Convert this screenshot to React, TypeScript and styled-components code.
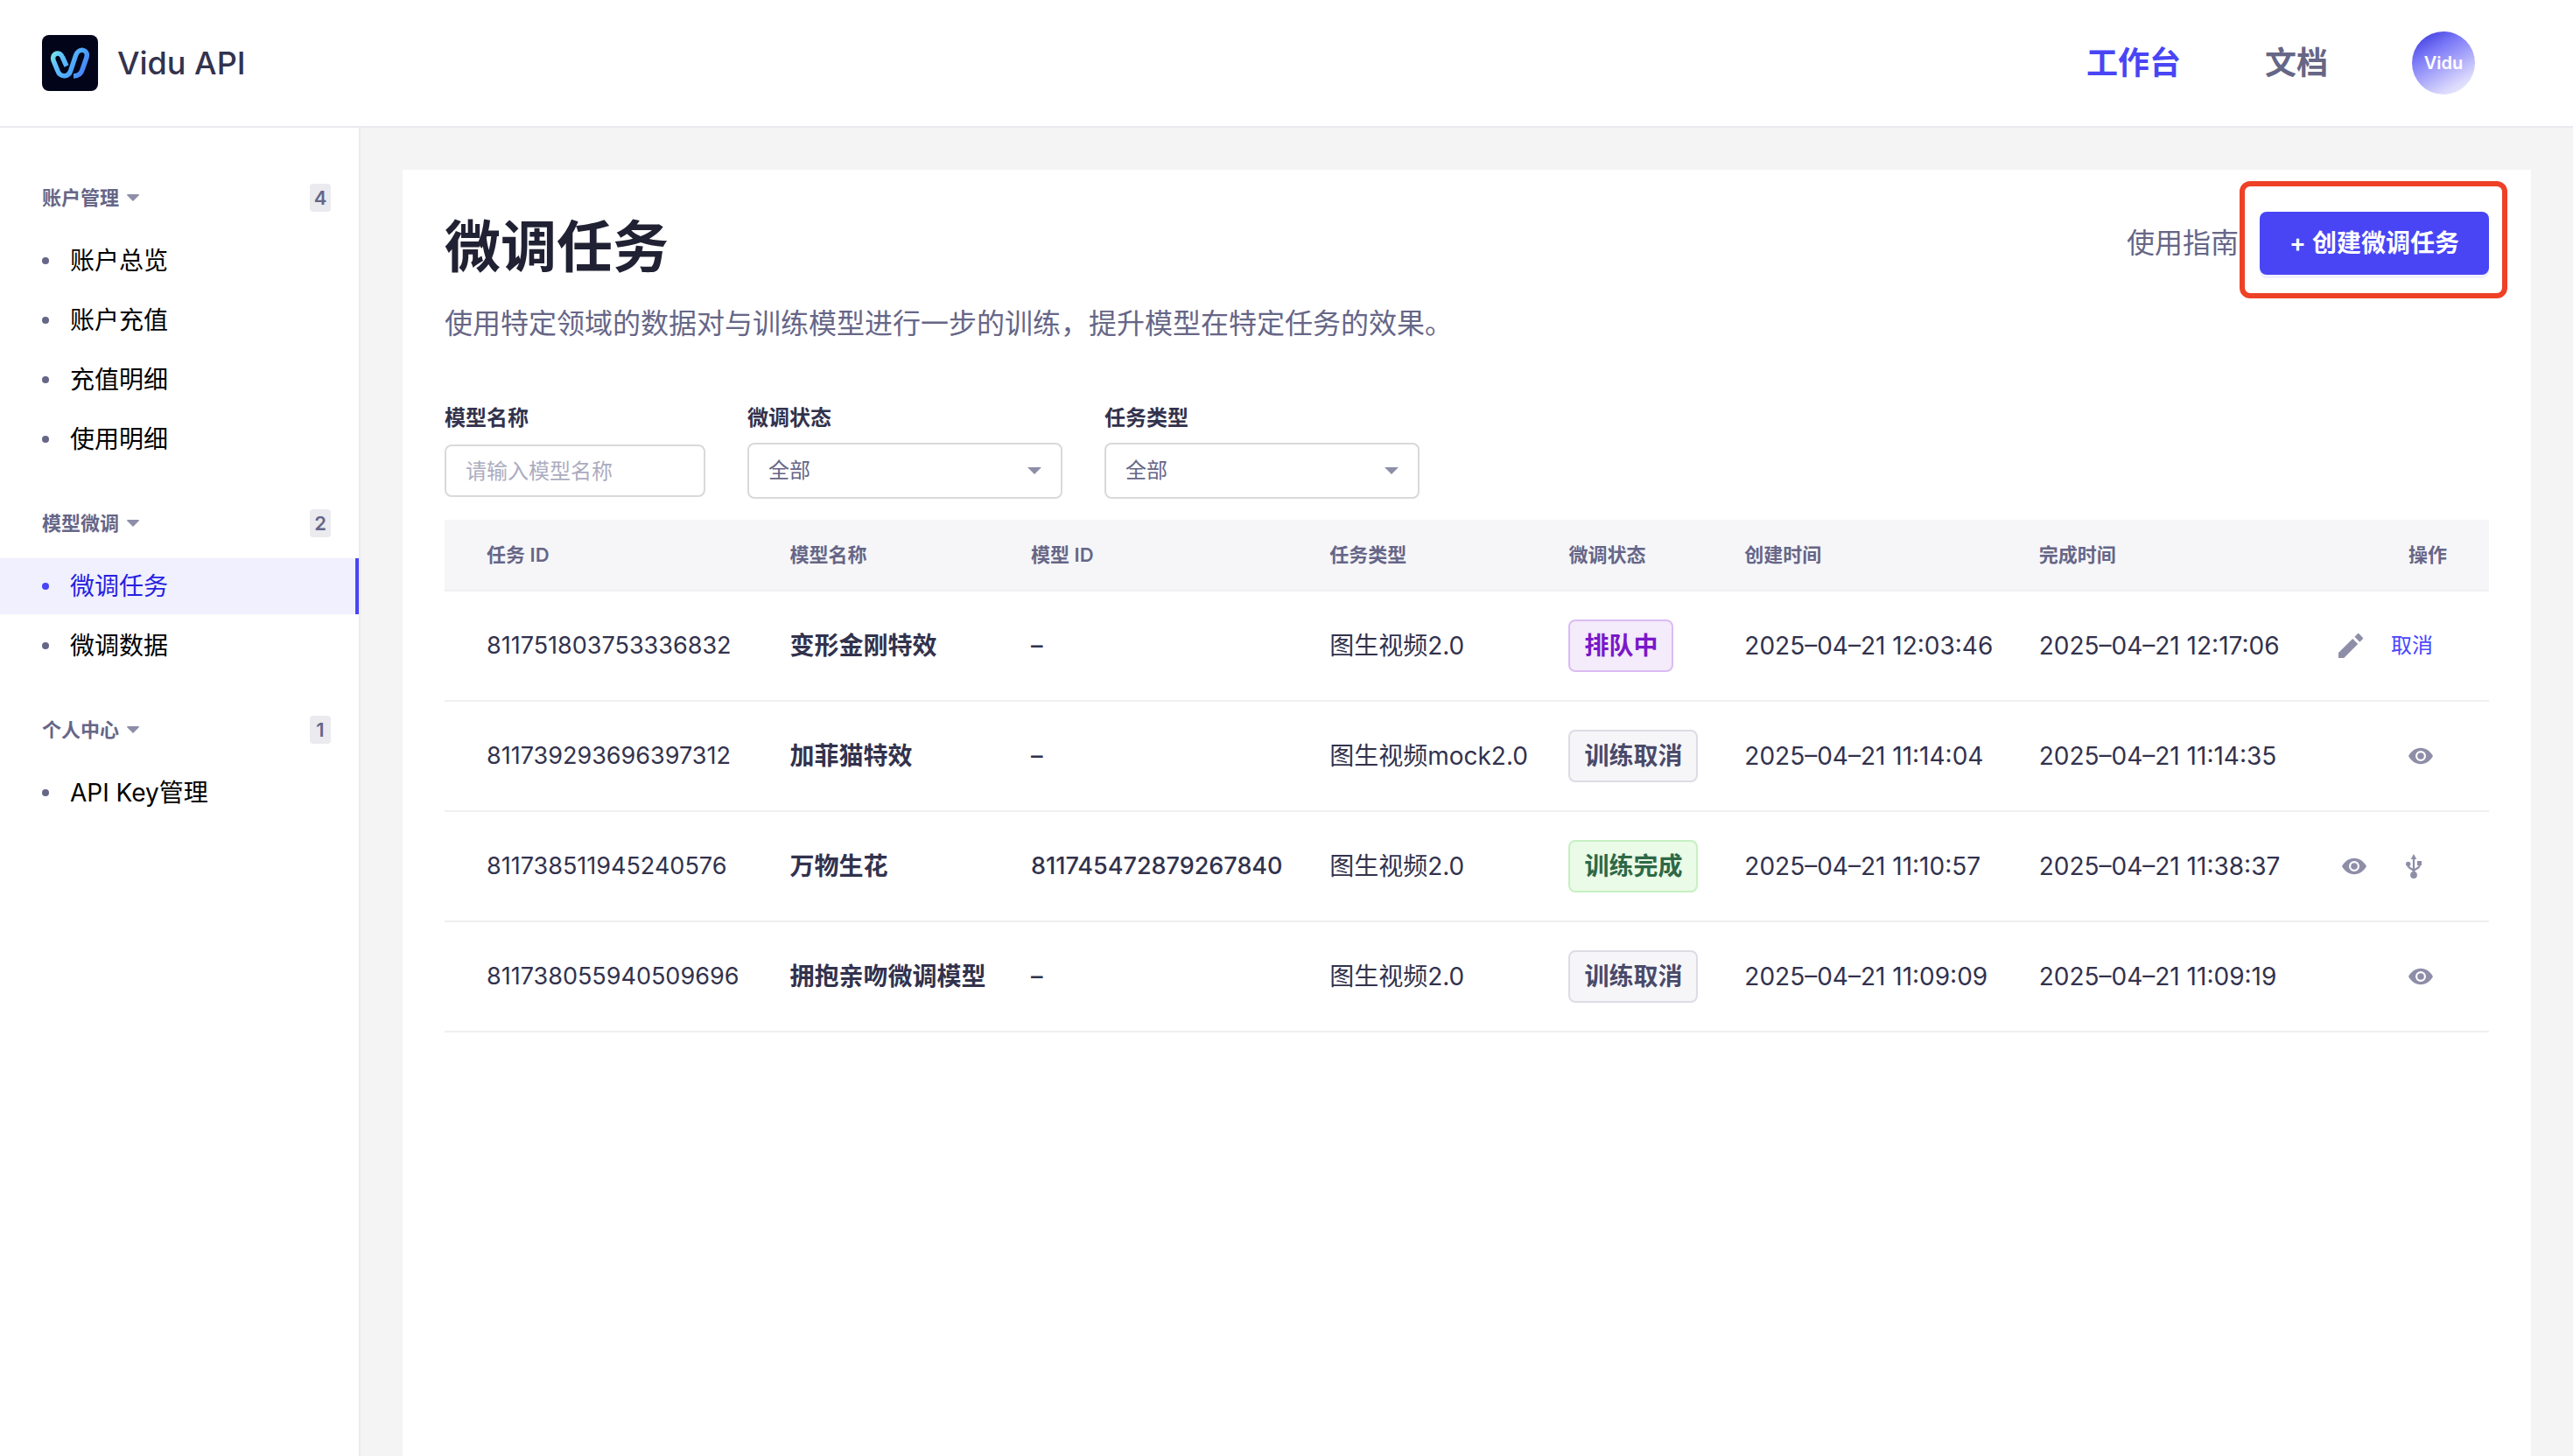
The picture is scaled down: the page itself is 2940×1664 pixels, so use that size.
import React from "react";
import styled, { createGlobalStyle, css } from "styled-components";

const GlobalStyle = createGlobalStyle`
  *, *::before, *::after { box-sizing: border-box; }
  html, body, #root { height: 100%; }
  body {
    margin: 0;
    background: #f4f4f4;
    color: #33334d;
    font-family: Inter, "Noto Sans CJK SC", sans-serif;
    font-size: 28px;
    line-height: 40px;
  }
  button, input, select { font: inherit; color: inherit; }
  a { color: inherit; text-decoration: none; }
`;

const Page = styled.div`
  min-height: 100%;
  display: flex;
  flex-direction: column;
`;

const Header = styled.header`
  display: flex;
  align-items: center;
  justify-content: space-between;
  height: 146px;
  flex: none;
  padding: 0 112px 0 48px;
  background: #fff;
  border-bottom: 2px solid #eaeaef;
`;

const Brand = styled.a`
  display: flex;
  align-items: center;
  gap: 22px;
  font-size: 36px;
  font-weight: 500;
`;

const TopNav = styled.nav`
  display: flex;
  align-items: center;
  gap: 96px;
`;

const TopLink = styled.a<{ $active?: boolean }>`
  font-size: 36px;
  font-weight: 600;
  color: ${(p) => (p.$active ? "#4945f5" : "#666687")};
`;

const Avatar = styled.button`
  width: 72px;
  height: 72px;
  padding: 0;
  border: 0;
  border-radius: 50%;
  color: #fff;
  font-size: 20px;
  font-weight: 600;
  background: linear-gradient(150deg, #4340e0 8%, #7b79f7 32%, #dcdafc 80%, #f0f0ff 100%);
`;

const Body = styled.div`
  flex: 1;
  display: flex;
`;

const Sidebar = styled.aside`
  flex: none;
  width: 412px;
  padding-top: 56px;
  background: #fff;
  border-right: 2px solid #eaeaef;
`;

const Group = styled.section`
  margin-bottom: 40px;
`;

const GroupHead = styled.button`
  display: flex;
  align-items: center;
  width: 100%;
  height: 48px;
  margin-bottom: 16px;
  padding: 0 32px 0 48px;
  border: 0;
  background: none;
  color: #666687;
  font-size: 22px;
  font-weight: 600;
  line-height: 32px;
`;

const Caret = styled.svg`
  width: 14px;
  height: 8px;
  margin-left: 9px;
  fill: #8e8ea9;
`;

const Count = styled.span`
  margin-left: auto;
  width: 24px;
  border-radius: 4px;
  background: #eaeaef;
  text-align: center;
`;

const Menu = styled.ul`
  display: flex;
  flex-direction: column;
  gap: 4px;
  margin: 0;
  padding: 0;
  list-style: none;
`;

const MenuLink = styled.a<{ $active?: boolean }>`
  display: flex;
  align-items: center;
  gap: 24px;
  height: 64px;
  padding-left: 48px;
  color: #000;

  &::before {
    content: "";
    width: 8px;
    height: 8px;
    border-radius: 50%;
    background: #666687;
  }

  ${(p) =>
    p.$active &&
    css`
      background: #f0f0ff;
      color: #271fe0;
      border-right: 4px solid #4945f5;
      &::before { background: #4945f5; }
    `}
`;

const Main = styled.main`
  flex: 1;
  min-width: 0;
  margin: 48px 48px 0;
  padding: 48px;
  background: #fff;
`;

const TitleRow = styled.div`
  display: flex;
  justify-content: space-between;
  align-items: flex-start;
`;

const Title = styled.h1`
  margin: 0;
  font-size: 64px;
  font-weight: 700;
  line-height: 80px;
  color: #212134;
`;

const Intro = styled.p`
  margin: 24px 0 0;
  font-size: 32px;
  line-height: 48px;
  color: #666687;
`;

const TitleActions = styled.div`
  display: flex;
  align-items: center;
  gap: 24px;
`;

const Guide = styled.a`
  font-size: 32px;
  color: #666687;
`;

const Highlight = styled.div`
  position: relative;

  &::after {
    content: "";
    position: absolute;
    inset: -35px -21px -27px -23px;
    border: 6px solid #ee4126;
    border-radius: 12px;
    pointer-events: none;
  }
`;

const CreateButton = styled.button`
  display: block;
  height: 72px;
  padding: 0 34px;
  border: 0;
  border-radius: 8px;
  background: #4945f5;
  box-shadow: 0 4px 0 #f0f0ff;
  color: #fff;
  font-size: 28px;
  font-weight: 600;
`;

const Filters = styled.form`
  display: flex;
  gap: 48px;
  margin: 64px 0 24px;
`;

const Field = styled.div`
  display: flex;
  flex-direction: column;
`;

const Label = styled.label`
  margin-bottom: 8px;
  font-size: 24px;
  font-weight: 600;
  color: #32324d;
`;

const Control = styled.div`
  display: flex;
  align-items: center;
  height: 64px;
`;

const TextInput = styled.input`
  width: 298px;
  height: 60px;
  padding: 0 22px;
  border: 2px solid #d9d9d9;
  border-radius: 8px;
  background: #fff;
  font-size: 24px;

  &::placeholder { color: #acacbf; opacity: 1; }
`;

const SelectBox = styled.div`
  position: relative;
  width: 360px;

  svg {
    position: absolute;
    right: 24px;
    top: 28px;
    width: 16px;
    height: 8px;
    fill: #8e8ea9;
    pointer-events: none;
  }
`;

const Select = styled.select`
  appearance: none;
  display: block;
  width: 100%;
  height: 64px;
  padding: 0 22px;
  border: 2px solid #d9d9d9;
  border-radius: 8px;
  background: #fff;
  color: #666687;
  font-size: 24px;
`;

const Table = styled.table`
  width: 100%;
  table-layout: fixed;
  border-collapse: separate;
  border-spacing: 0;
  white-space: nowrap;
`;

const Th = styled.th<{ $end?: boolean }>`
  height: 82px;
  padding: 0 0 0 2px;
  background: #f6f6f9;
  border-bottom: 2px solid #efeff0;
  color: #666687;
  font-size: 22px;
  font-weight: 600;
  text-align: ${(p) => (p.$end ? "right" : "left")};
  ${(p) => p.$end && "padding-right: 48px;"}
  &:first-child { padding-left: 48px; }
`;

const Td = styled.td`
  height: 126px;
  padding: 0 0 0 2px;
  border-bottom: 2px solid #efeff0;
  color: #32324d;
  &:first-child { padding-left: 48px; }
`;

const NameCell = styled(Td)`
  font-weight: 600;
`;

const IdCell = styled(Td)<{ $medium?: boolean }>`
  font-size: 27px;
  font-weight: ${(p) => (p.$medium ? 500 : 400)};
`;

const tones = {
  purple: ["#f4ebfb", "#dbbcf2", "#7a18c9"],
  gray: ["#f6f6f9", "#dcdce4", "#4a4a6a"],
  green: ["#eafbe7", "#c6f0c2", "#2f6846"],
};

const Tag = styled.span<{ $tone: keyof typeof tones }>`
  display: inline-block;
  padding: 8px 16px;
  border: 2px solid ${(p) => tones[p.$tone][1]};
  border-radius: 8px;
  background: ${(p) => tones[p.$tone][0]};
  color: ${(p) => tones[p.$tone][2]};
  font-weight: 600;
`;

const Actions = styled.div`
  display: flex;
  align-items: center;
  justify-content: flex-end;
  gap: 32px;
  padding-right: 64px;
`;

const IconButton = styled.button<{ $wide?: boolean }>`
  display: flex;
  align-items: center;
  justify-content: center;
  width: ${(p) => (p.$wide ? 44 : 28)}px;
  padding: 0;
  border: 0;
  background: none;
  color: #8e8ea9;
  svg { display: block; fill: currentColor; }
`;

const TextButton = styled.button`
  padding: 0;
  border: 0;
  background: none;
  color: #4945ff;
  font-size: 24px;
`;

const Triangle = () => (
  <Caret viewBox="0 0 14 8" preserveAspectRatio="none" aria-hidden="true">
    <path d="M0 .9C0 .3.4 0 1 0h12c.6 0 1 .3 1 .9L7 8z" />
  </Caret>
);

const Logo = () => (
  <svg width="64" height="64" viewBox="0 0 64 64" aria-hidden="true">
    <defs>
      <linearGradient id="ribbon" x1="10" y1="18" x2="54" y2="44" gradientUnits="userSpaceOnUse">
        <stop offset="0" stopColor="#7af0dc" />
        <stop offset=".25" stopColor="#62c4fb" />
        <stop offset=".65" stopColor="#4ba3fb" />
        <stop offset="1" stopColor="#4672f6" />
      </linearGradient>
    </defs>
    <rect width="64" height="64" rx="8" fill="#020419" />
    <path
      d="M28 35.500L23.500 25.500C21 18 10.500 20.500 13 29L17.500 40C20.500 49 30.500 49 33 40L38.500 23.500C41.500 14 53.500 16 51 25.500L46.500 38.500C45 44 42 47 36 47"
      fill="none" stroke="url(#ribbon)" strokeWidth="5.500" strokeLinejoin="round"
    />
  </svg>
);

const Eye = () => (
  <svg width="28" height="28" viewBox="0 0 28 28" aria-hidden="true">
    <path fillRule="evenodd" d="M0 14C3 8.500 8 4.700 14 4.700S25 8.500 28 14C25 19.500 20 23.300 14 23.300S3 19.500 0 14zm14 6a6 6 0 1 0 0-12 6 6 0 0 0 0 12zm0-2.200a3.800 3.800 0 1 1 0-7.600 3.800 3.800 0 0 1 0 7.600z" />
  </svg>
);

const Pencil = () => (
  <svg width="28" height="28" viewBox="0 0 28 28" aria-hidden="true">
    <path d="M0 22 16.200 6l6 6L6.200 28H0zM18.500 3.800 21.700.5c.7-.6 1.300-.6 2 0l3.900 3.900c.6.700.6 1.300 0 2L24.300 9.700z" />
  </svg>
);

const Usb = () => (
  <svg width="18" height="28" viewBox="0 0 18 28" aria-hidden="true">
    <path d="M9 0l3.300 6H5.700z" />
    <path d="M9 5v17M2.700 12v1.500c0 3 6.300 3.500 6.300 6.500M15.500 12v1.500c0 3-6.500 3.500-6.500 6.500" fill="none" stroke="currentColor" strokeWidth="2.200" />
    <circle cx="2.700" cy="11.500" r="2.700" />
    <path d="M13 8h5v5h-5z" />
    <circle cx="9" cy="24" r="3.900" />
  </svg>
);

type Item = { label: string; active?: boolean };
const groups: { title: string; items: Item[] }[] = [
  {
    title: "账户管理",
    items: [{ label: "账户总览" }, { label: "账户充值" }, { label: "充值明细" }, { label: "使用明细" }],
  },
  { title: "模型微调", items: [{ label: "微调任务", active: true }, { label: "微调数据" }] },
  { title: "个人中心", items: [{ label: "API Key管理" }] },
];

type Task = {
  id: string;
  name: string;
  model: string;
  kind: string;
  status: string;
  tone: keyof typeof tones;
  created: string;
  finished: string;
  actions: string[];
};

const tasks: Task[] = [
  { id: "811751803753336832", name: "变形金刚特效", model: "–", kind: "图生视频2.0", status: "排队中", tone: "purple", created: "2025–04–21 12:03:46", finished: "2025–04–21 12:17:06", actions: ["edit", "cancel"] },
  { id: "811739293696397312", name: "加菲猫特效", model: "–", kind: "图生视频mock2.0", status: "训练取消", tone: "gray", created: "2025–04–21 11:14:04", finished: "2025–04–21 11:14:35", actions: ["view"] },
  { id: "811738511945240576", name: "万物生花", model: "811745472879267840", kind: "图生视频2.0", status: "训练完成", tone: "green", created: "2025–04–21 11:10:57", finished: "2025–04–21 11:38:37", actions: ["view", "connect"] },
  { id: "811738055940509696", name: "拥抱亲吻微调模型", model: "–", kind: "图生视频2.0", status: "训练取消", tone: "gray", created: "2025–04–21 11:09:09", finished: "2025–04–21 11:09:19", actions: ["view"] },
];

const Action = ({ kind }: { kind: string }) => {
  if (kind === "cancel") return <TextButton type="button">取消</TextButton>;
  if (kind === "edit") return <IconButton type="button" aria-label="编辑"><Pencil /></IconButton>;
  if (kind === "connect") return <IconButton type="button" $wide aria-label="调用"><Usb /></IconButton>;
  return <IconButton type="button" aria-label="查看"><Eye /></IconButton>;
};

const columns = [
  { title: "任务 ID", width: "16.8%" },
  { title: "模型名称", width: "11.8%" },
  { title: "模型 ID", width: "14.6%" },
  { title: "任务类型", width: "11.7%" },
  { title: "微调状态", width: "8.6%" },
  { title: "创建时间", width: "14.4%" },
  { title: "完成时间", width: "12%" },
  { title: "操作", width: "10.1%" },
];

const SelectField = ({ id, label }: { id: string; label: string }) => (
  <Field>
    <Label htmlFor={id}>{label}</Label>
    <SelectBox>
      <Select id={id}>
        <option>全部</option>
      </Select>
      <svg viewBox="0 0 16 8" aria-hidden="true"><path d="M0 0h16L8 8z" /></svg>
    </SelectBox>
  </Field>
);

export default function App() {
  return (
    <Page>
      <GlobalStyle />
      <Header>
        <Brand href="#"><Logo />Vidu API</Brand>
        <TopNav>
          <TopLink href="#" $active>工作台</TopLink>
          <TopLink href="#">文档</TopLink>
          <Avatar type="button">Vidu</Avatar>
        </TopNav>
      </Header>
      <Body>
        <Sidebar>
          {groups.map((g) => (
            <Group key={g.title}>
              <GroupHead type="button">
                {g.title}
                <Triangle />
                <Count>{g.items.length}</Count>
              </GroupHead>
              <Menu>
                {g.items.map((it) => (
                  <li key={it.label}><MenuLink href="#" $active={it.active}>{it.label}</MenuLink></li>
                ))}
              </Menu>
            </Group>
          ))}
        </Sidebar>
        <Main>
          <TitleRow>
            <div>
              <Title>微调任务</Title>
              <Intro>使用特定领域的数据对与训练模型进行一步的训练，提升模型在特定任务的效果。</Intro>
            </div>
            <TitleActions>
              <Guide href="#">使用指南</Guide>
              <Highlight><CreateButton type="button">+ 创建微调任务</CreateButton></Highlight>
            </TitleActions>
          </TitleRow>
          <Filters>
            <Field>
              <Label htmlFor="model-name">模型名称</Label>
              <Control><TextInput id="model-name" placeholder="请输入模型名称" /></Control>
            </Field>
            <SelectField id="status" label="微调状态" />
            <SelectField id="kind" label="任务类型" />
          </Filters>
          <Table>
            <colgroup>{columns.map((c) => <col key={c.title} width={c.width} />)}</colgroup>
            <thead>
              <tr>{columns.map((c, i) => <Th key={c.title} $end={i === columns.length - 1}>{c.title}</Th>)}</tr>
            </thead>
            <tbody>
              {tasks.map((t) => (
                <tr key={t.id}>
                  <IdCell>{t.id}</IdCell>
                  <NameCell>{t.name}</NameCell>
                  <IdCell $medium>{t.model}</IdCell>
                  <Td>{t.kind}</Td>
                  <Td><Tag $tone={t.tone}>{t.status}</Tag></Td>
                  <Td>{t.created}</Td>
                  <Td>{t.finished}</Td>
                  <Td><Actions>{t.actions.map((a) => <Action key={a} kind={a} />)}</Actions></Td>
                </tr>
              ))}
            </tbody>
          </Table>
        </Main>
      </Body>
    </Page>
  );
}
